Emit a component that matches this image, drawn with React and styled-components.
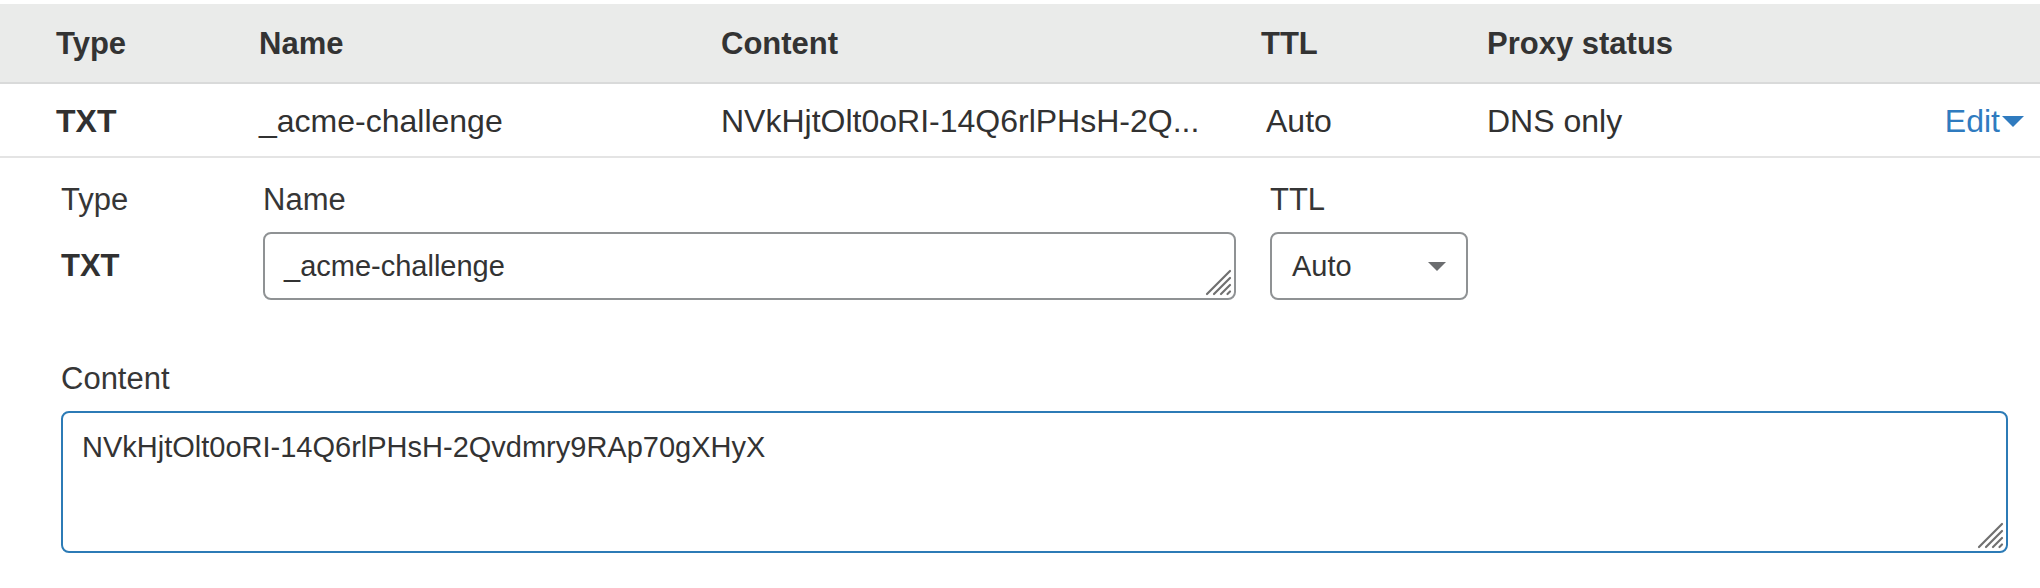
import React from "react";
import styled, { createGlobalStyle } from "styled-components";

const Global = createGlobalStyle`
  body {
    margin: 0;
    background: #fff;
    font-family: "Liberation Sans", Arial, sans-serif;
    color: #333;
  }
`;

const Page = styled.div`
  padding-top: 4px;
  width: 2040px;
`;

const Columns = styled.div`
  display: grid;
  grid-template-columns: 203px 462px 540px 226px 1fr auto;
  align-items: center;
  padding: 0 16px 0 56px;
`;

const HeadRow = styled(Columns)`
  box-sizing: border-box;
  height: 80px;
  padding-top: 2px;
  background: #eaebea;
  border-bottom: 2px solid #d9dada;
  font-size: 31px;
  font-weight: 700;
  color: #333;
`;

const DataRow = styled(Columns)`
  box-sizing: border-box;
  height: 74px;
  padding-top: 3px;
  border-bottom: 2px solid #e4e4e4;
  font-size: 32px;
  color: #313131;
`;

const Cell = styled.div`
  white-space: nowrap;
  font-weight: ${(p) => (p.$bold ? 700 : "inherit")};
  padding-left: ${(p) => p.$shift || 0}px;
`;

const EditLink = styled.a`
  display: flex;
  align-items: center;
  gap: 2px;
  color: #2f7bbf;
  font-size: 32px;
  text-decoration: none;
  cursor: pointer;
`;

const Form = styled.div`
  padding: 22px 32px 0 61px;
`;

const FieldGrid = styled.div`
  display: grid;
  grid-template-columns: 168px 973px 198px;
  column-gap: 34px;
`;

const Field = styled.div`
  display: flex;
  flex-direction: column;
  gap: 12px;
`;

const Label = styled.div`
  font-size: 31px;
  line-height: 40px;
  color: #363636;
`;

const StaticValue = styled.div`
  height: 68px;
  display: flex;
  align-items: center;
  font-size: 31px;
  font-weight: 700;
  color: #313131;
`;

const BoxWrap = styled.div`
  position: relative;
`;

const TextBox = styled.textarea`
  box-sizing: border-box;
  display: block;
  width: 100%;
  height: ${(p) => p.$height}px;
  border: 2px solid ${(p) => (p.$focus ? "#2c7bb6" : "#8f9294")};
  border-radius: 8px;
  padding: ${(p) => (p.$focus ? "14px 19px" : "0 19px")};
  line-height: ${(p) => (p.$focus ? "40px" : "64px")};
  font-family: "Liberation Sans", Arial, sans-serif;
  font-size: 29px;
  color: #333;
  resize: none;
  outline: none;
  overflow: hidden;
  background: #fff;
`;

const Grip = styled.svg`
  position: absolute;
  right: 4px;
  bottom: 4px;
  width: 28px;
  height: 28px;
  pointer-events: none;
`;

const Select = styled.div`
  box-sizing: border-box;
  height: 68px;
  border: 2px solid #8f9294;
  border-radius: 8px;
  padding: 0 20px;
  display: flex;
  align-items: center;
  justify-content: space-between;
  font-size: 29px;
  color: #333;
`;

const Caret = styled.span`
  width: 0;
  height: 0;
  border-left: ${(p) => p.$w}px solid transparent;
  border-right: ${(p) => p.$w}px solid transparent;
  border-top: ${(p) => p.$h}px solid ${(p) => p.$color};
`;

const ContentField = styled(Field)`
  margin-top: 59px;
`;

function ResizeGrip() {
  return (
    <Grip viewBox="0 0 28 28">
      <g stroke="#707070" strokeWidth="2.2" strokeLinecap="round">
        <line x1="3" y1="26" x2="26" y2="3" />
        <line x1="10" y1="26" x2="26" y2="10" />
        <line x1="17" y1="26" x2="26" y2="17" />
        <line x1="23.5" y1="26" x2="26" y2="23.5" />
      </g>
    </Grip>
  );
}

export default function App() {
  const value = "NVkHjtOlt0oRI-14Q6rlPHsH-2Qvdmry9RAp70gXHyX";
  return (
    <Page>
      <Global />
      <HeadRow>
        <Cell>Type</Cell>
        <Cell>Name</Cell>
        <Cell>Content</Cell>
        <Cell>TTL</Cell>
        <Cell>Proxy status</Cell>
        <Cell />
      </HeadRow>
      <DataRow>
        <Cell $bold>TXT</Cell>
        <Cell>_acme-challenge</Cell>
        <Cell>{value.slice(0, 27)}...</Cell>
        <Cell $shift={5}>Auto</Cell>
        <Cell>DNS only</Cell>
        <EditLink>
          Edit
          <Caret $w={11} $h={11} $color="#2f7bbf" />
        </EditLink>
      </DataRow>
      <Form>
        <FieldGrid>
          <Field>
            <Label>Type</Label>
            <StaticValue>TXT</StaticValue>
          </Field>
          <Field>
            <Label>Name</Label>
            <BoxWrap>
              <TextBox $height={68} defaultValue="_acme-challenge" />
              <ResizeGrip />
            </BoxWrap>
          </Field>
          <Field>
            <Label>TTL</Label>
            <Select>
              Auto
              <Caret $w={9} $h={9} $color="#6b6d6f" />
            </Select>
          </Field>
        </FieldGrid>
        <ContentField>
          <Label>Content</Label>
          <BoxWrap>
            <TextBox $focus $height={142} defaultValue={value} />
            <ResizeGrip />
          </BoxWrap>
        </ContentField>
      </Form>
    </Page>
  );
}
